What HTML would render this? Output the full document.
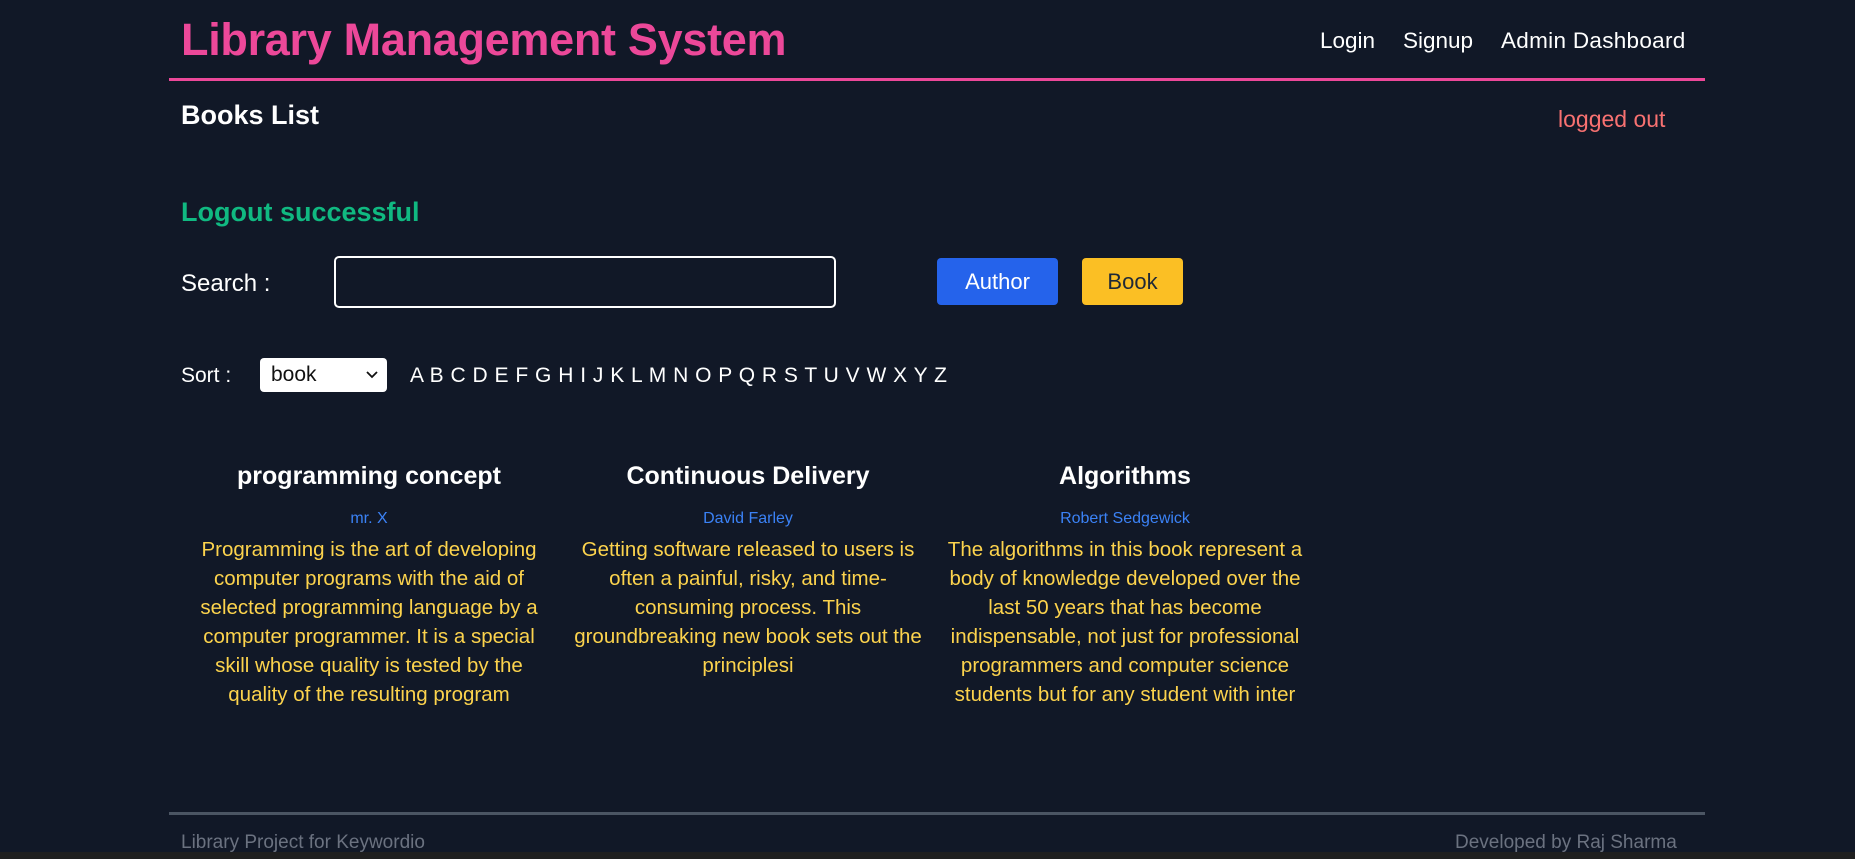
<!DOCTYPE html>
<html><head><meta charset="utf-8"><style>
*{margin:0;padding:0;box-sizing:border-box}
body{width:1855px;height:859px;background:#111827;font-family:"Liberation Sans",sans-serif;position:relative;overflow:hidden;color:#fff}
.a{position:absolute;white-space:nowrap}
.card{position:absolute;top:458px;width:378px;text-align:center}
.card h3{font-size:25px;font-weight:bold;color:#fff;height:43px;line-height:36px}
.card .au{font-size:16px;color:#3b82f6;line-height:22px;margin-top:7px}
.card p{font-size:20.5px;color:#fcd34d;line-height:29px;white-space:nowrap;margin-top:5px}
</style></head><body>
<div class="a" style="left:181px;top:14px;font-size:45px;font-weight:bold;color:#ec4899;letter-spacing:-0.3px">Library Management System</div>
<div class="a" style="left:1320px;top:28px;font-size:22.5px">Login</div>
<div class="a" style="left:1403px;top:28px;font-size:22.5px">Signup</div>
<div class="a" style="left:1501px;top:28px;font-size:22.5px;letter-spacing:0.3px">Admin Dashboard</div>
<div class="a" style="left:169px;top:78px;width:1536px;height:3px;background:#ec4899"></div>
<div class="a" style="left:181px;top:100px;font-size:27px;font-weight:bold">Books List</div>
<div class="a" style="left:1558px;top:106px;font-size:23px;color:#f87171">logged out</div>
<div class="a" style="left:181px;top:197px;font-size:27px;font-weight:bold;color:#10b981">Logout successful</div>
<div class="a" style="left:181px;top:270px;font-size:24px">Search :</div>
<div class="a" style="left:334px;top:256px;width:502px;height:52px;border:2px solid #fff;border-radius:5px"></div>
<div class="a" style="left:937px;top:258px;width:121px;height:47px;background:#2563eb;border-radius:4px;font-size:22px;text-align:center;line-height:47px">Author</div>
<div class="a" style="left:1082px;top:258px;width:101px;height:47px;background:#fbbf24;border-radius:4px;font-size:22px;text-align:center;line-height:47px;color:#1f2937">Book</div>
<div class="a" style="left:181px;top:364px;font-size:21px">Sort :</div>
<div class="a" style="left:260px;top:358px;width:127px;height:34px;background:#fff;border-radius:4px;color:#111;font-size:21px;line-height:34px;padding-left:11px">book<svg style="position:absolute;right:9px;top:13px" width="12" height="8" viewBox="0 0 12 8"><path d="M1 1l5 5 5-5" stroke="#111" stroke-width="1.8" fill="none"/></svg></div>
<div class="a" style="left:410px;top:364px;font-size:21px;letter-spacing:0.5px">A B C D E F G H I J K L M N O P Q R S T U V W X Y Z</div>
<div class="card" style="left:180px"><h3>programming concept</h3><div class="au">mr. X</div><p>Programming is the art of developing<br>computer programs with the aid of<br>selected programming language by a<br>computer programmer. It is a special<br>skill whose quality is tested by the<br>quality of the resulting program</p></div>
<div class="card" style="left:559px"><h3>Continuous Delivery</h3><div class="au">David Farley</div><p>Getting software released to users is<br>often a painful, risky, and time-<br>consuming process. This<br>groundbreaking new book sets out the<br>principlesi</p></div>
<div class="card" style="left:936px"><h3>Algorithms</h3><div class="au">Robert Sedgewick</div><p>The algorithms in this book represent a<br>body of knowledge developed over the<br>last 50 years that has become<br>indispensable, not just for professional<br>programmers and computer science<br>students but for any student with inter</p></div>
<div class="a" style="left:169px;top:812px;width:1536px;height:3px;background:#4b5563"></div>
<div class="a" style="left:181px;top:832px;font-size:19px;color:#6b7280">Library Project for Keywordio</div>
<div class="a" style="left:1455px;top:832px;font-size:19px;color:#6b7280">Developed by Raj Sharma</div>
<div class="a" style="left:0;top:852px;width:1855px;height:7px;background:#1f1f1f"></div>
</body></html>
